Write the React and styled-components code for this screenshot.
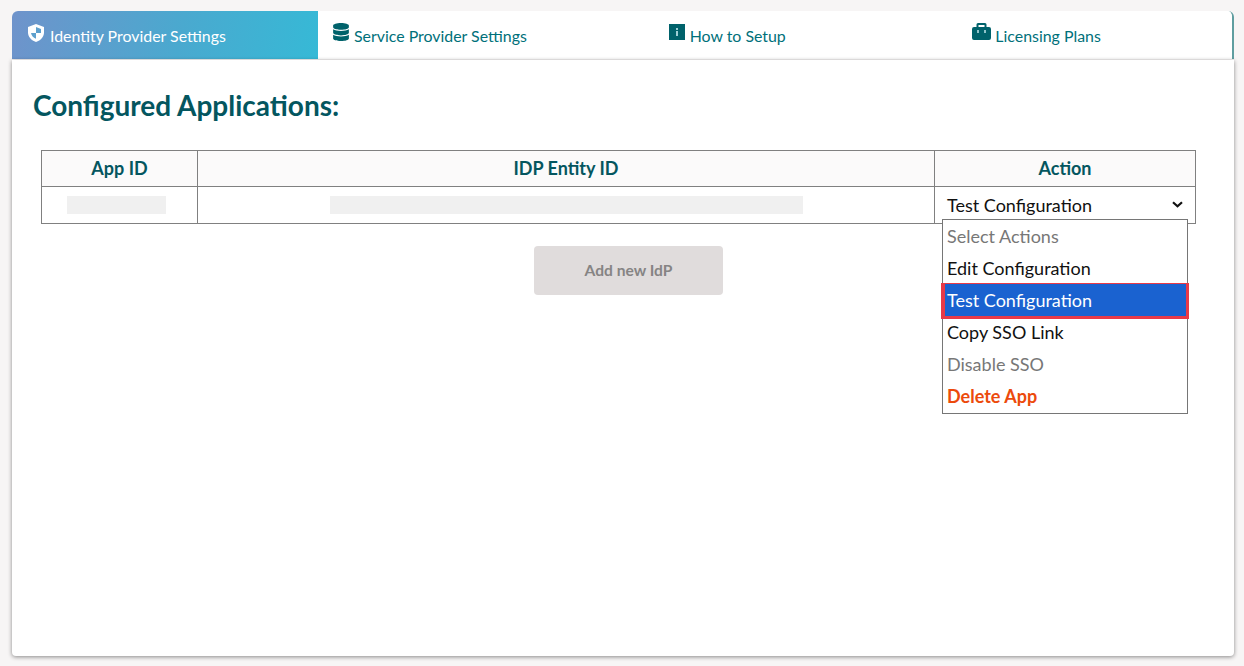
import React from 'react';
import styled, { createGlobalStyle } from 'styled-components';
import { FaDatabase } from 'react-icons/fa';

const GlobalStyle = createGlobalStyle`
  html, body { margin: 0; padding: 0; }
  body {
    background: #f7f5f5;
    font-family: Lato, "Liberation Sans", sans-serif;
  }
`;

const teal = '#00626b';

const Page = styled.div`
  box-sizing: border-box;
  width: 1244px;
  height: 666px;
  padding: 11px 10px 10px 12px;
`;

const TabBar = styled.nav`
  display: grid;
  grid-template-columns: 306px 1fr 1fr 1fr;
  height: 48px;
  background: #fff;
  border-radius: 6px 6px 0 0;
  border-right: 2px solid #5f9ea0;
  overflow: hidden;
`;

const Tab = styled.div`
  display: flex;
  align-items: flex-start;
  gap: ${p => p.$gap || 5}px;
  padding: 14px 0 0 ${p => p.$inset}px;
  font-size: 15.9px;
  line-height: 21px;
  color: ${p => (p.$active ? '#fff' : '#00707a')};
  background: ${p => (p.$active ? 'linear-gradient(100deg, #6f93cb 0%, #4aa9cf 55%, #36b9d6 100%)' : '#fff')};
  svg { flex: none; margin-top: ${p => p.$lift}px; color: ${p => (p.$active ? '#fff' : teal)}; }
`;

const Card = styled.main`
  position: relative;
  box-sizing: border-box;
  height: 596px;
  margin-top: 1px;
  padding: 29px 38px 0 29px;
  background: #fff;
  border-radius: 0 0 4px 4px;
  box-shadow: 0 1px 4px rgba(0, 0, 0, 0.45);
`;

const Title = styled.h1`
  margin: 0 0 28px -8px;
  font-size: 28px;
  line-height: 33px;
  font-weight: 700;
  color: #04565f;
`;

const Table = styled.div`
  display: grid;
  grid-template-columns: 155px 737px 1fr;
  grid-template-rows: 36px 36px;
  border: 1px solid #808080;
`;

const HeadCell = styled.div`
  display: flex;
  align-items: center;
  justify-content: center;
  padding-bottom: 2px;
  font-size: 18px;
  font-weight: 700;
  color: #04565f;
  background: #fbfafa;
  border-bottom: 1px solid #808080;
  border-left: ${p => (p.$first ? 'none' : '1px solid #808080')};
`;

const BodyCell = styled.div`
  display: flex;
  align-items: center;
  justify-content: center;
  position: relative;
  border-left: ${p => (p.$first ? 'none' : '1px solid #808080')};
`;

const Redacted = styled.div`
  height: 18px;
  width: ${p => p.$w}px;
  margin-left: ${p => p.$shift || 0}px;
  background: #f0f0f0;
`;

const SelectBox = styled.div`
  flex: 1;
  display: flex;
  align-items: center;
  justify-content: space-between;
  padding: 0 12px 1px;
  font-size: 18px;
  color: #111;
`;

const Menu = styled.ul`
  position: absolute;
  top: 32px;
  left: 7px;
  width: 244px;
  margin: 0;
  padding: 0 0 1px;
  list-style: none;
  background: #fff;
  border: 1px solid #767676;
  z-index: 2;
`;

const Option = styled.li`
  position: relative;
  height: 32px;
  padding: 0 4px;
  font-size: 18px;
  line-height: 32px;
  font-weight: ${p => (p.$tone === 'danger' ? 700 : 400)};
  color: ${p => ({ muted: '#777', danger: '#ec4a0c', selected: '#fff' }[p.$tone] || '#111')};
  background: ${p => (p.$tone === 'selected' ? '#1a62d0' : 'transparent')};
  box-shadow: ${p => (p.$tone === 'selected'
    ? 'inset 2px 0 0 #e83a48, inset -1px 0 0 #e83a48, 0 1px 0 2px #e83a48'
    : 'none')};
`;

const ButtonRow = styled.div`
  display: flex;
  justify-content: center;
  margin-top: 22px;
  padding-left: 20px;
`;

const AddButton = styled.button`
  width: 189px;
  height: 49px;
  padding: 0 0 2px;
  border: none;
  border-radius: 4px;
  background: #e0dcdc;
  color: #868484;
  font-family: inherit;
  font-size: 15.6px;
  font-weight: 700;
`;

const ShieldIcon = () => (
  <svg width="18" height="18" viewBox="0 0 18 18">
    <path fill="#fff" d="M9 0l8 3v5.500c0 4.400-3.300 7.900-8 9.500-4.700-1.600-8-5.100-8-9.500V3z" />
    <path fill="#5ea0cd" d="M9 3l5 1.900V9H9zM9 9v5.800C6.300 13.600 4.400 11.500 4 9z" />
  </svg>
);

const DatabaseIcon = () => <FaDatabase style={{ width: 16, height: 18 }} />;

const InfoIcon = () => (
  <svg width="16" height="16" viewBox="0 0 16 16">
    <rect width="16" height="16" fill="currentColor" />
    <rect x="7" y="4" width="2" height="2" fill="#9fd0d6" />
    <rect x="7" y="7" width="2" height="5" fill="#9fd0d6" />
  </svg>
);

const CaseIcon = () => (
  <svg width="19" height="17" viewBox="0 0 19 17">
    <path fill="currentColor" fillRule="evenodd" d="M6 0h7a1.500 1.500 0 0 1 1.500 1.500V4H17a2 2 0 0 1 2 2v9a2 2 0 0 1-2 2H2a2 2 0 0 1-2-2V6a2 2 0 0 1 2-2h2.500V1.500A1.500 1.500 0 0 1 6 0zm.5 2v2h6V2z" />
    <rect x="5" y="7" width="2" height="3" fill="#8fc4ca" />
    <rect x="12" y="7" width="2" height="3" fill="#8fc4ca" />
  </svg>
);

const tabs = [
  { label: 'Identity Provider Settings', Icon: ShieldIcon, inset: 15, lift: -1, active: true },
  { label: 'Service Provider Settings', Icon: DatabaseIcon, inset: 15, lift: -2 },
  { label: 'How to Setup', Icon: InfoIcon, inset: 46, lift: -1 },
  { label: 'Licensing Plans', Icon: CaseIcon, inset: 45, lift: -2, gap: 4 },
];

const actions = [
  { label: 'Select Actions', tone: 'muted' },
  { label: 'Edit Configuration' },
  { label: 'Test Configuration', tone: 'selected' },
  { label: 'Copy SSO Link' },
  { label: 'Disable SSO', tone: 'muted' },
  { label: 'Delete App', tone: 'danger' },
];

const Chevron = () => (
  <svg width="11" height="7" viewBox="0 0 11 7" fill="none" stroke="#111" strokeWidth="2.200">
    <path d="M1 1.200l4.500 4 4.500-4" />
  </svg>
);

const App = () => (
  <Page>
    <GlobalStyle />
    <TabBar>
      {tabs.map(({ label, Icon, inset, lift, active, gap }) => (
        <Tab key={label} $inset={inset} $lift={lift} $active={active} $gap={gap}>
          <Icon />
          <span>{label}</span>
        </Tab>
      ))}
    </TabBar>
    <Card>
      <Title>Configured Applications:</Title>
      <Table>
        <HeadCell $first>App ID</HeadCell>
        <HeadCell>IDP Entity ID</HeadCell>
        <HeadCell>Action</HeadCell>
        <BodyCell $first><Redacted $w={99} $shift={-6} /></BodyCell>
        <BodyCell><Redacted $w={473} /></BodyCell>
        <BodyCell>
          <SelectBox>
            Test Configuration
            <Chevron />
          </SelectBox>
          <Menu>
            {actions.map(a => (
              <Option key={a.label} $tone={a.tone}>{a.label}</Option>
            ))}
          </Menu>
        </BodyCell>
      </Table>
      <ButtonRow>
        <AddButton>Add new IdP</AddButton>
      </ButtonRow>
    </Card>
  </Page>
);

export default App;
